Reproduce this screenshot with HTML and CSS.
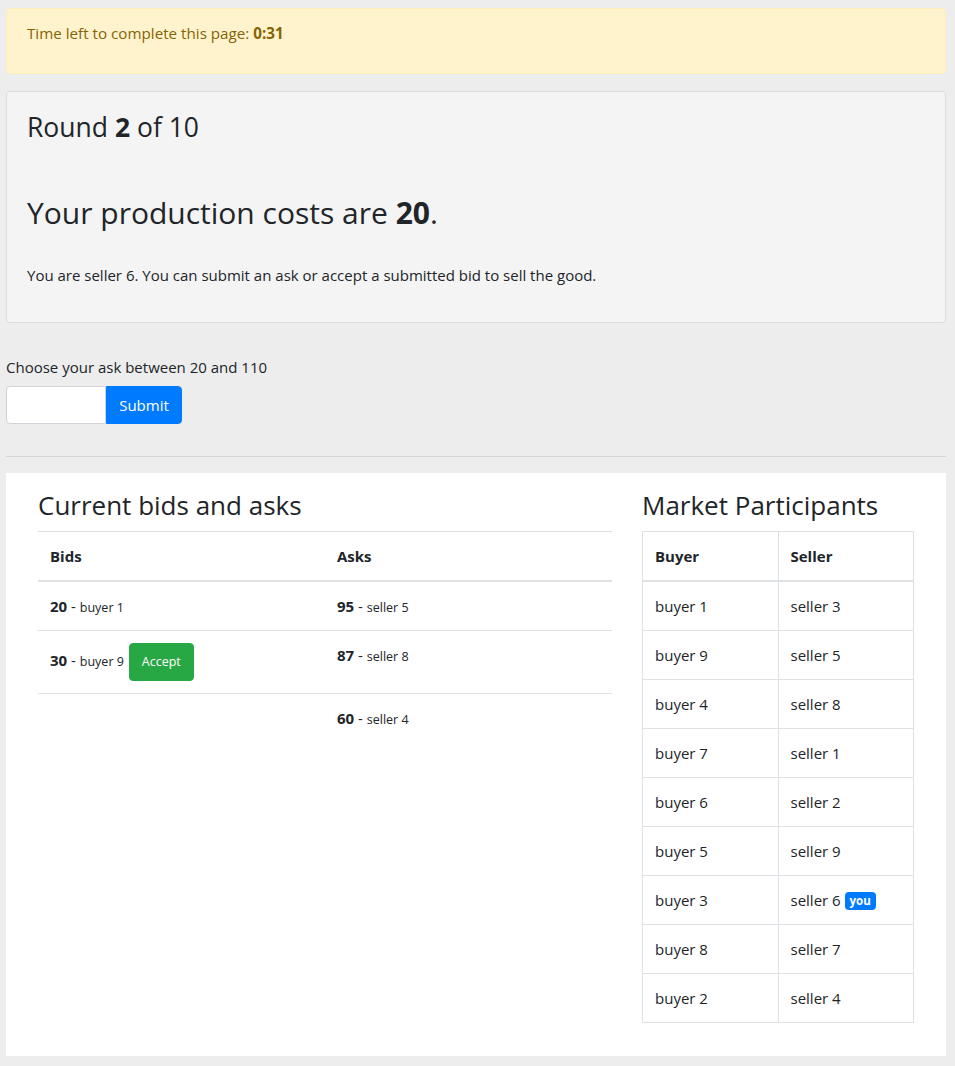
FILE: index.html
```html
<!DOCTYPE html>
<html lang="en">
<head>
<meta charset="utf-8">
<title>Market</title>
<link rel="stylesheet" href="styles.css">
</head>
<body>
<div class="container">
  <div class="alert">
    <p>Time left to complete this page: <strong>0:31</strong></p>
  </div>

  <div class="card">
    <h3 class="round">Round <strong>2</strong> of 10</h3>
    <h2 class="costs">Your production costs are <strong>20</strong>.</h2>
    <p class="info">You are seller 6. You can submit an ask or accept a submitted bid to sell the good.</p>
  </div>

  <div class="form-group">
    <label class="ask-label" for="ask">Choose your ask between 20 and 110</label>
    <div class="input-group">
      <input id="ask" class="ask-input" type="text">
      <button class="btn btn-primary" type="button">Submit</button>
    </div>
  </div>

  <hr class="divider">

  <div class="panel">
    <div class="col col-main">
      <h3 class="section-title">Current bids and asks</h3>
      <table class="table">
        <thead>
          <tr><th class="half">Bids</th><th class="half">Asks</th></tr>
        </thead>
        <tbody>
          <tr>
            <td><strong>20</strong> - <small>buyer 1</small></td>
            <td><strong>95</strong> - <small>seller 5</small></td>
          </tr>
          <tr>
            <td><strong>30</strong> - <small>buyer 9</small> <button class="btn btn-success" type="button">Accept</button></td>
            <td><strong>87</strong> - <small>seller 8</small></td>
          </tr>
          <tr>
            <td></td>
            <td><strong>60</strong> - <small>seller 4</small></td>
          </tr>
        </tbody>
      </table>
    </div>
    <div class="col col-side">
      <h3 class="section-title">Market Participants</h3>
      <table class="table table-bordered">
        <thead>
          <tr><th class="half">Buyer</th><th class="half">Seller</th></tr>
        </thead>
        <tbody>
          <tr><td>buyer 1</td><td>seller 3</td></tr>
          <tr><td>buyer 9</td><td>seller 5</td></tr>
          <tr><td>buyer 4</td><td>seller 8</td></tr>
          <tr><td>buyer 7</td><td>seller 1</td></tr>
          <tr><td>buyer 6</td><td>seller 2</td></tr>
          <tr><td>buyer 5</td><td>seller 9</td></tr>
          <tr><td>buyer 3</td><td>seller 6 <span class="badge">you</span></td></tr>
          <tr><td>buyer 8</td><td>seller 7</td></tr>
          <tr><td>buyer 2</td><td>seller 4</td></tr>
        </tbody>
      </table>
    </div>
  </div>
</div>
</body>
</html>
```

FILE: styles.css
```css
* { box-sizing: border-box; }

html, body {
  margin: 0;
  background: #ededed;
}

body {
  font-family: "Open Sans", "Noto Sans", sans-serif;
  font-size: 15px;
  line-height: 24px;
  color: #212529;
}

.container {
  width: 940px;
  margin-left: 6px;
  padding-top: 8px;
  padding-bottom: 11px;
}

strong { font-weight: 700; }

.alert {
  background: #fff3cd;
  border: 1px solid #ffeeba;
  border-radius: 4px;
  color: #856404;
  padding: 12px 20px;
  margin-bottom: 17px;
  font-size: 15.2px;
}
.alert p { margin: 0 0 16px; }

.card {
  background: #f4f4f4;
  border: 1px solid #dcdcdc;
  border-radius: 4px;
  padding: 20px 20px 15px;
}

h2, h3 {
  font-weight: 400;
  margin: 0 0 8px;
  line-height: 1.2;
}
h3 { font-size: 26px; }
h2 { font-size: 30px; }

.round { font-size: 26.5px; margin-bottom: 8px; }
.costs { margin-top: 51px; }
.info { margin: 32px 0 20px; }

.form-group {
  margin-top: 32px;
  margin-bottom: 32px;
}
.ask-label {
  display: block;
  margin-bottom: 7px;
}
.input-group {
  display: flex;
}
.ask-input {
  width: 100px;
  height: 38px;
  border: 1px solid #ced4da;
  border-radius: 4px 0 0 4px;
  background: #fff;
  padding: 6px 12px;
  font: inherit;
}
.btn {
  font-family: inherit;
  border: 1px solid transparent;
  border-radius: 4px;
  color: #fff;
  cursor: pointer;
}
.btn-primary {
  background: #007bff;
  border-color: #007bff;
  border-radius: 0 4px 4px 0;
  font-size: 15px;
  line-height: 24px;
  height: 38px;
  padding: 6px 12px;
  width: 76px;
}
.btn-success {
  background: #28a745;
  border-color: #28a745;
  font-size: 12.5px;
  line-height: 24px;
  height: 38px;
  padding: 6px 12px;
  margin-left: 1px;
  vertical-align: middle;
}

.divider {
  border: 0;
  border-top: 1px solid #d6d6d6;
  margin: 0 0 16px;
}

.panel {
  background: #fff;
  padding: 17px 17px 17px;
  display: flex;
}
.col {
  padding: 0 15px;
}
.col-main { width: 604px; }
.col-side { width: 302px; }

.section-title {
  font-size: 26px;
  margin-bottom: 10px;
}

.table {
  width: 100%;
  border-collapse: collapse;
  margin-bottom: 16px;
}
.table th, .table td {
  padding: 12px;
  text-align: left;
  vertical-align: top;
  border-top: 1px solid #dee2e6;
  line-height: 24px;
}
.table th {
  font-weight: 700;
}
.table thead th {
  border-bottom: 2px solid #dee2e6;
  vertical-align: bottom;
}
.half { width: 50%; }

.table small {
  font-size: 12.5px;
  line-height: 1;
}

.table-bordered th, .table-bordered td {
  border: 1px solid #dee2e6;
}
.table-bordered thead th {
  border-bottom-width: 2px;
}

.badge {
  display: inline-block;
  background: #007bff;
  color: #fff;
  font-size: 11.5px;
  font-weight: 700;
  line-height: 1;
  padding: 3px 5px 4px;
  border-radius: 4px;
  vertical-align: 1px;
}
```
